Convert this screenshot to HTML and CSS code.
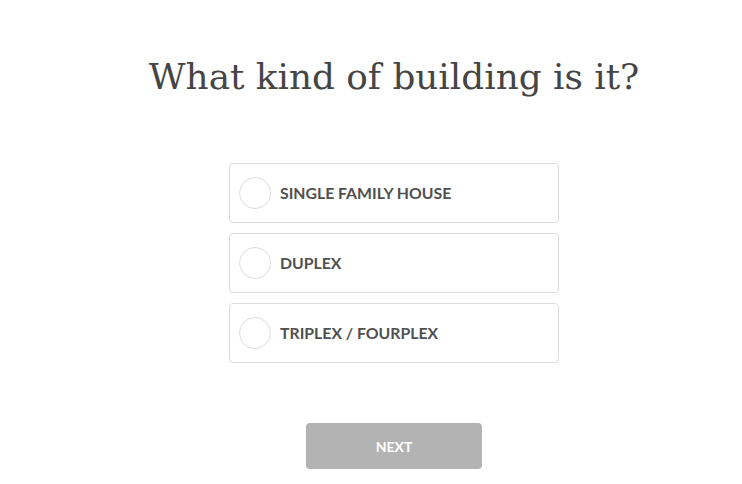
FILE: index.html
```html
<!DOCTYPE html>
<html>
<head>
<meta charset="utf-8">
<link rel="stylesheet" href="styles.css">
</head>
<body>
<main class="page">
  <h1 class="title">What kind of building is it?</h1>
  <div class="options">
    <label class="option"><span class="radio"></span><span class="label">SINGLE FAMILY HOUSE</span></label>
    <label class="option"><span class="radio"></span><span class="label">DUPLEX</span></label>
    <label class="option"><span class="radio"></span><span class="label">TRIPLEX / FOURPLEX</span></label>
  </div>
  <button class="next">NEXT</button>
</main>
</body>
</html>
```
FILE: styles.css
```css
html, body {
  margin: 0;
  padding: 0;
  background: #fff;
}
.page {
  padding-left: 46px;
  display: flex;
  flex-direction: column;
  align-items: center;
  font-family: Lato, "Open Sans", sans-serif;
}
.title {
  margin: 52px 0 0 0;
  font-family: "DejaVu Serif", serif;
  font-weight: normal;
  font-size: 35.8px;
  line-height: 50px;
  color: #454545;
}
.options {
  margin-top: 61px;
  display: flex;
  flex-direction: column;
  gap: 10px;
  width: 330px;
}
.option {
  box-sizing: border-box;
  height: 60px;
  border: 1px solid #dcdcdc;
  border-radius: 4px;
  display: flex;
  align-items: center;
  padding-left: 9px;
  gap: 9px;
}
.radio {
  box-sizing: border-box;
  width: 32px;
  height: 32px;
  border: 1px solid #ddd;
  border-radius: 50%;
}
.label {
  font-weight: bold;
  font-size: 15.8px;
  color: #505050;
  margin-bottom: 2px;
}
.next {
  margin-top: 60px;
  width: 176px;
  height: 46px;
  border: none;
  border-radius: 4px;
  background: #b3b3b3;
  color: #fff;
  font-family: Lato, sans-serif;
  font-weight: bold;
  font-size: 14px;
}
```
